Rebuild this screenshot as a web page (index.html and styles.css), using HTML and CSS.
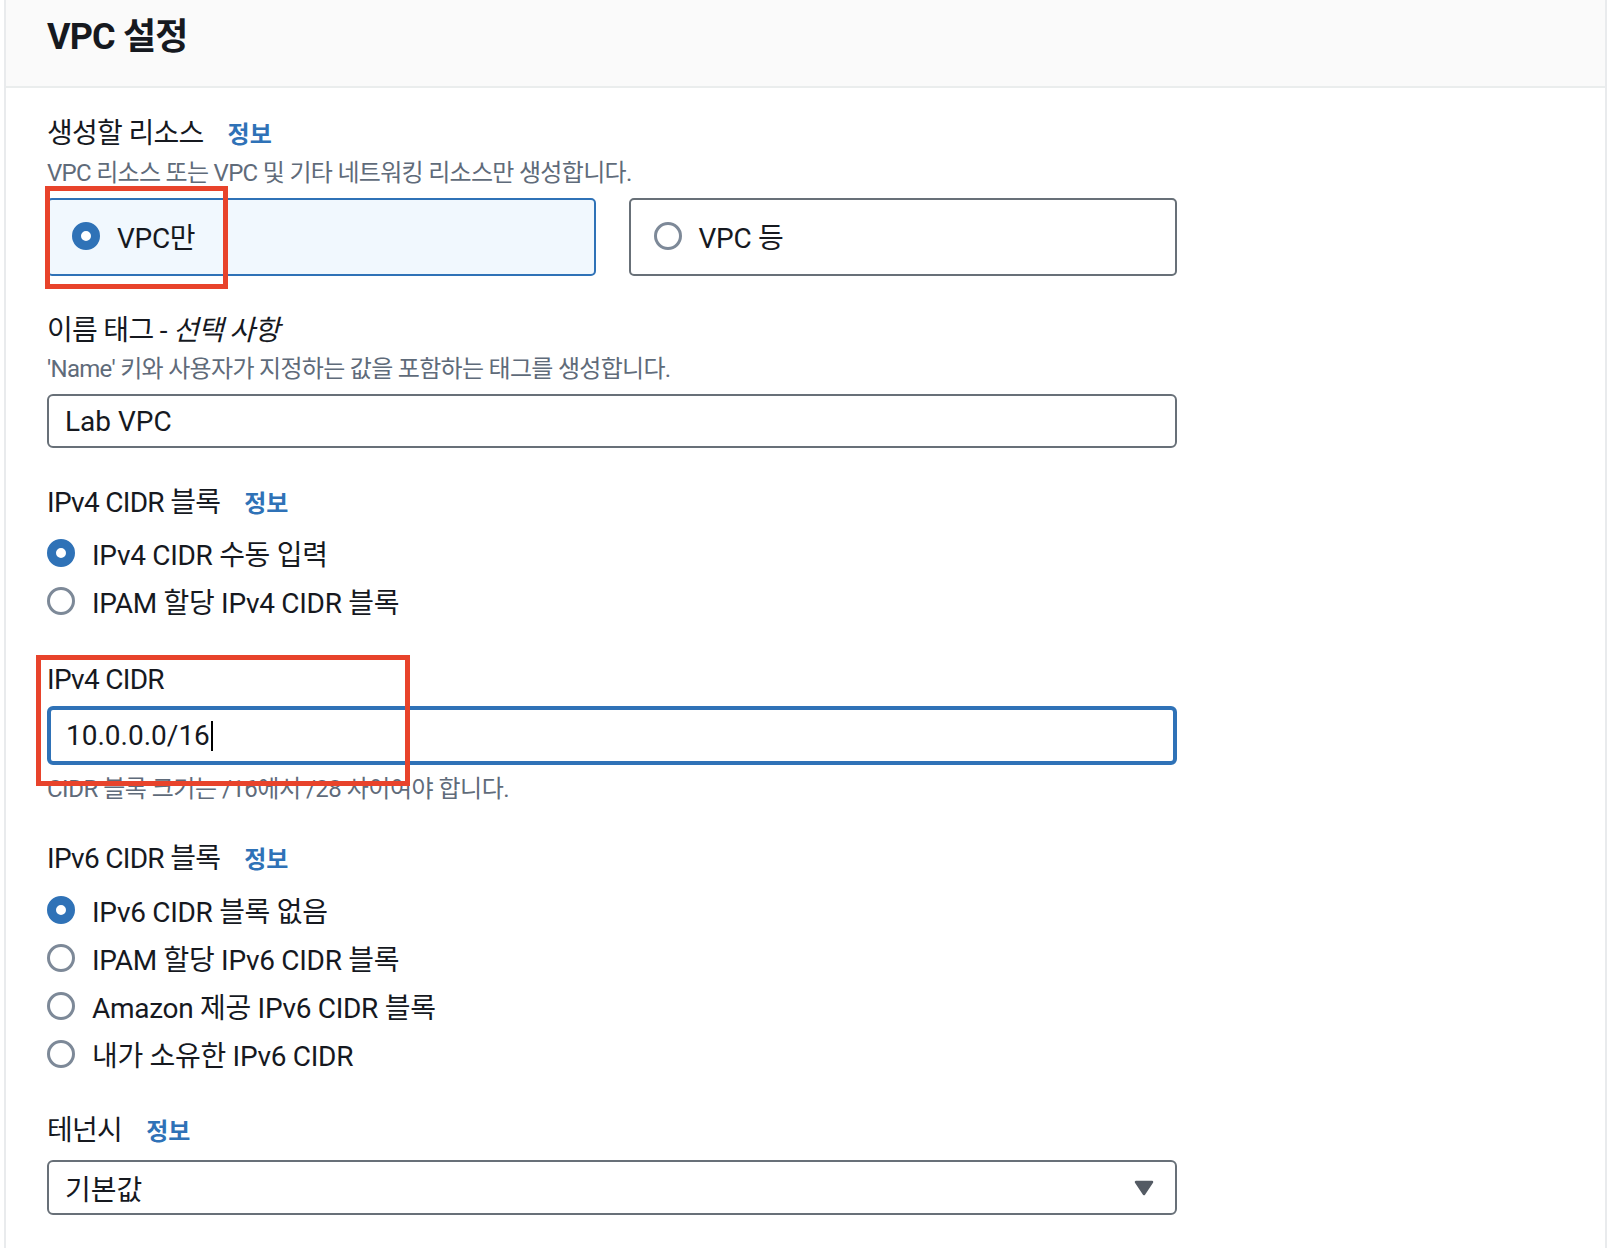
FILE: index.html
```html
<!DOCTYPE html>
<html lang="ko">
<head>
    <meta charset="UTF-8">
    <meta name="viewport" content="width=device-width, initial-scale=1.0">
    <title>VPC 설정</title>
    <link rel="stylesheet" href="styles.css">
</head>
<body>
    <div class="page">
        <section class="panel">
            <header class="panel-header">
                <h2>VPC 설정</h2>
            </header>
            <div class="panel-body">
                <div class="field">
                    <div class="label">생성할 리소스<a class="info" href="#">정보</a></div>
                    <p class="desc">VPC 리소스 또는 VPC 및 기타 네트워킹 리소스만 생성합니다.</p>
                    <div class="tiles">
                        <div class="tile selected"><span class="radio checked"></span>VPC만</div>
                        <div class="tile"><span class="radio"></span>VPC 등</div>
                    </div>
                </div>

                <div class="field">
                    <div class="label">이름 태그 - <em>선택 사항</em></div>
                    <p class="desc">'Name' 키와 사용자가 지정하는 값을 포함하는 태그를 생성합니다.</p>
                    <div class="input">Lab VPC</div>
                </div>

                <div class="field">
                    <div class="label">IPv4 CIDR 블록<a class="info" href="#">정보</a></div>
                    <div class="options">
                        <div class="option"><span class="radio checked"></span>IPv4 CIDR 수동 입력</div>
                        <div class="option"><span class="radio"></span>IPAM 할당 IPv4 CIDR 블록</div>
                    </div>
                </div>

                <div class="field">
                    <div class="label">IPv4 CIDR</div>
                    <div class="input focus">10.0.0.0/16<span class="caret"></span></div>
                    <p class="hint">CIDR 블록 크기는 /16에서 /28 사이여야 합니다.</p>
                </div>

                <div class="field">
                    <div class="label">IPv6 CIDR 블록<a class="info" href="#">정보</a></div>
                    <div class="options options-v6">
                        <div class="option"><span class="radio checked"></span>IPv6 CIDR 블록 없음</div>
                        <div class="option"><span class="radio"></span>IPAM 할당 IPv6 CIDR 블록</div>
                        <div class="option"><span class="radio"></span>Amazon 제공 IPv6 CIDR 블록</div>
                        <div class="option"><span class="radio"></span>내가 소유한 IPv6 CIDR</div>
                    </div>
                </div>

                <div class="field field-tenancy">
                    <div class="label">테넌시<a class="info" href="#">정보</a></div>
                    <div class="input select">
                        기본값
                        <svg class="arrow" width="20" height="16" viewBox="0 0 20 16">
                            <polygon points="2,2 18,2 10,14" fill="#545b64" stroke="#545b64" stroke-width="2.5" stroke-linejoin="round"/>
                        </svg>
                    </div>
                </div>
            </div>
        </section>

        <!-- screenshot annotations -->
        <div class="mark mark-tile"></div>
        <div class="mark mark-cidr"></div>
    </div>
</body>
</html>
```

FILE: styles.css
```css
body, h2, p {
    margin: 0;
    padding: 0;
}

body {
    font-family: Roboto, "Noto Sans CJK KR", sans-serif;
    font-feature-settings: "palt";
    background-color: #ffffff;
    color: #16191f;
}

.page {
    position: relative;
}

.panel {
    margin: 0 3px 0 4px;
    border-left: 2px solid #e9ebed;
    border-right: 2px solid #e9ebed;
    min-height: 1248px;
}

.panel-header {
    height: 71px;
    padding: 15px 0 0 41px;
    background-color: #fafafa;
    border-bottom: 2px solid #eaeded;
}

.panel-header h2 {
    font-size: 36px;
    line-height: 44px;
    font-weight: 700;
    letter-spacing: -0.8px;
}

.panel-body {
    padding: 28px 41px 0;
}

.field {
    width: 1130px;
}

.field + .field {
    margin-top: 37px;
}

.field.field-tenancy {
    margin-top: 35px;
}

.label {
    font-size: 28px;
    line-height: 36px;
    letter-spacing: -0.7px;
}

.label em {
    font-style: italic;
}

.info {
    margin-left: 24px;
    font-size: 24px;
    font-weight: 700;
    color: #2f72b7;
    text-decoration: none;
    letter-spacing: 0;
}

.desc {
    margin-top: 4px;
    font-size: 24px;
    line-height: 32px;
    letter-spacing: -0.7px;
    color: #5f6b7a;
}

.hint {
    margin-top: 9px;
    font-size: 24px;
    line-height: 30px;
    letter-spacing: -0.5px;
    color: #5f6b7a;
}

.tiles {
    display: grid;
    grid-template-columns: 1fr 1fr;
    gap: 33px;
    margin-top: 9px;
}

.tile {
    height: 78px;
    box-sizing: border-box;
    display: flex;
    align-items: center;
    padding: 0 0 2px 23px;
    border: 2px solid #687078;
    border-radius: 5px;
    font-size: 28px;
    letter-spacing: -0.3px;
}

.tile.selected {
    border-color: #2f72b7;
    background-color: #f1f8fe;
}

.radio {
    flex: none;
    width: 28px;
    height: 28px;
    box-sizing: border-box;
    margin-right: 17px;
    border: 3px solid #7d8998;
    border-radius: 50%;
    background-color: #ffffff;
}

.radio.checked {
    border: 9px solid #2f72b7;
}

.options {
    margin-top: 7px;
}

.options-v6 {
    margin-top: 8px;
}

.option {
    height: 48px;
    display: flex;
    align-items: center;
    font-size: 28px;
    letter-spacing: -0.3px;
}

.input {
    height: 54px;
    box-sizing: border-box;
    display: flex;
    align-items: center;
    margin-top: 9px;
    padding-left: 16px;
    border: 2px solid #687078;
    border-radius: 6px;
    font-size: 28px;
}

.input.focus {
    height: 59px;
    margin-top: 8px;
    padding-left: 15px;
    border: 4px solid #2f72b7;
}

.caret {
    width: 2px;
    height: 30px;
    margin-left: 1px;
    background-color: #000000;
}

.input.select {
    height: 55px;
    margin-top: 10px;
    justify-content: space-between;
    padding-right: 21px;
}

.mark {
    position: absolute;
    border: 5px solid #e8432b;
}

.mark-tile {
    left: 45px;
    top: 186px;
    width: 173px;
    height: 93px;
}

.mark-cidr {
    left: 36px;
    top: 655px;
    width: 364px;
    height: 121px;
}
```
